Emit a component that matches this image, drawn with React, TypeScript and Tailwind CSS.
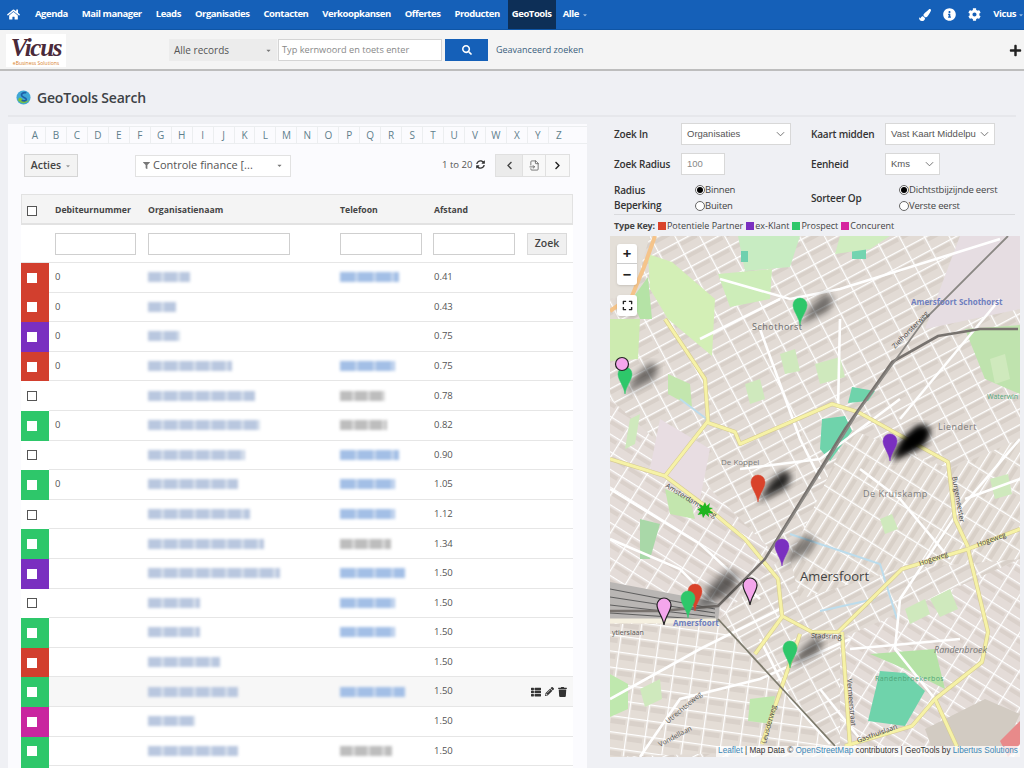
import { FaHome, FaInfoCircle, FaCog, FaPaintBrush, FaSearch, FaPlus, FaSyncAlt, FaChevronLeft, FaChevronRight, FaThList, FaPencilAlt, FaTrash, FaFilter, FaCaretDown, FaExpand } from 'react-icons/fa';
import { FileInput } from 'lucide-react';

const navItems = ['Agenda', 'Mail manager', 'Leads', 'Organisaties', 'Contacten', 'Verkoopkansen', 'Offertes', 'Producten'];
const letters = 'ABCDEFGHIJKLMNOPQRSTUVWXYZ'.split('');

const RED = 'bg-[#d23f2e]';
const PURPLE = 'bg-[#7a2fc0]';
const GREEN = 'bg-[#2ec76a]';
const PINK = 'bg-[#c9259f]';

const rows = [
  { color: RED, deb: '0', name: 42, phone: 59, blue: true, dist: '0.41' },
  { color: RED, deb: '0', name: 28, phone: 0, blue: true, dist: '0.43' },
  { color: PURPLE, deb: '0', name: 32, phone: 0, blue: true, dist: '0.75' },
  { color: RED, deb: '0', name: 84, phone: 55, blue: true, dist: '0.75' },
  { color: '', deb: '', name: 107, phone: 45, blue: false, dist: '0.78' },
  { color: GREEN, deb: '0', name: 112, phone: 47, blue: false, dist: '0.82' },
  { color: '', deb: '', name: 97, phone: 59, blue: true, dist: '0.90' },
  { color: GREEN, deb: '0', name: 90, phone: 55, blue: true, dist: '1.05' },
  { color: '', deb: '', name: 102, phone: 55, blue: true, dist: '1.12' },
  { color: GREEN, deb: '', name: 116, phone: 51, blue: false, dist: '1.34' },
  { color: PURPLE, deb: '', name: 132, phone: 65, blue: true, dist: '1.50' },
  { color: '', deb: '', name: 52, phone: 55, blue: true, dist: '1.50' },
  { color: GREEN, deb: '', name: 52, phone: 55, blue: true, dist: '1.50' },
  { color: RED, deb: '', name: 72, phone: 0, blue: true, dist: '1.50' },
  { color: GREEN, deb: '', name: 90, phone: 65, blue: true, dist: '1.50', hover: true },
  { color: PINK, deb: '', name: 47, phone: 0, blue: true, dist: '1.50' },
  { color: GREEN, deb: '', name: 90, phone: 52, blue: false, dist: '1.50' },
  { color: GREEN, deb: '', name: 0, phone: 0, blue: true, dist: '' },
];

const legend = [
  { label: 'Potentiele Partner', color: 'bg-[#d9432b]' },
  { label: 'ex-Klant', color: 'bg-[#7a2fc0]' },
  { label: 'Prospect', color: 'bg-[#2ec76a]' },
  { label: 'Concurent', color: 'bg-[#d6249f]' },
];

function Logo() {
  return (
    <div className="w-[60px] h-[33px] bg-white flex flex-col items-center justify-center">
      <span className="text-[25px] leading-[25px] italic font-bold text-[#4a2a3a] tracking-tighter font-['Liberation_Serif',serif]">Vicus</span>
      <span className="text-[5px] leading-[6px] text-[#d9822b]">eBusiness Solutions</span>
    </div>
  );
}

function Pin({ x, y, fill, stroke }: { x: number; y: number; fill: string; stroke?: string }) {
  return (
    <path
      transform={`translate(${x} ${y})`}
      d="M0 0 C-1 -8 -7 -14 -7 -20 A7 7 0 1 1 7 -20 C7 -14 1 -8 0 0Z"
      fill={fill}
      stroke={stroke ?? fill}
      strokeWidth={stroke ? 1.2 : 0.5}
    />
  );
}

function Shadow({ x, y, dark = 0.55, size = 1 }: { x: number; y: number; dark?: number; size?: number }) {
  return (
    <path
      transform={`translate(${x} ${y}) scale(${size})`}
      d="M0 0 L12 -20 L26 -32 L34 -26 L28 -14 Z"
      fill="#000"
      opacity={dark}
      filter="url(#blur)"
    />
  );
}

function MapDrawing() {
  const yellow = [
    'M665 320 L705 380 L708 422 L665 477 L610 460',
    'M706 423 L735 433 L740 445 L832 405 L858 413 L948 463 L955 520 L968 548',
    'M665 477 L705 507 L745 540 L778 580 L782 617 L812 633 L838 633 L902 570 L968 550 L1020 530',
    'M968 550 L988 633 L982 663 L935 700 L912 727 L845 747',
    'M782 618 L755 655',
    'M800 635 L762 745',
    'M842 633 L850 747',
    'M935 700 L958 750',
  ];
  const white = [
    'M610 490 L700 545 L760 600',
    'M720 280 L790 300 L840 290 L1000 240',
    'M760 330 L800 440 L820 480',
    'M840 320 L838 410',
    'M740 470 L820 460 L900 400',
    'M860 470 L900 500 L950 560',
    'M1020 440 L960 510 L900 600 L895 650 L935 700',
    'M900 420 L1000 300',
    'M610 700 L700 650 L780 610',
    'M640 758 L680 700 L760 680 L850 640',
    'M850 650 L960 640',
    'M820 690 L860 740',
    'M610 540 L680 570 L720 610',
    'M1020 480 L965 500',
    'M700 340 L780 300',
    'M760 640 L790 700 L830 745',
  ];
  const parks = [
    'M880 520 L892 515 L898 530 L885 535Z',
    'M930 600 L950 590 L958 610 L940 618Z',
    'M990 480 L1008 475 L1012 495 L995 500Z',
    'M780 355 L795 350 L800 372 L785 375Z',
    'M815 365 L840 358 L845 378 L820 385Z',
    'M745 385 L760 380 L765 400 L750 405Z',
    'M630 420 L640 415 L635 445 L625 450Z',
    'M990 360 L1005 355 L1010 380 L995 385Z',
    'M905 610 L925 600 L930 615 L910 625Z',
    'M640 690 L660 680 L662 700 L645 708Z',
  ];
  return (
    <svg viewBox="610 237 410 521" className="block w-[410px] h-[521px]">
      <defs>
        <filter id="blur"><feGaussianBlur stdDeviation="3.5" /></filter>
        <pattern id="b1" width="22" height="14" patternUnits="userSpaceOnUse" patternTransform="rotate(-28)">
          <rect width="22" height="14" fill="#e2dbd5" />
          <rect x="2" y="2" width="18" height="4" fill="#d8d0c9" />
          <path d="M0 0.5H22M0.5 0V14" stroke="#fff" strokeWidth="1.4" />
        </pattern>
        <pattern id="b2" width="20" height="15" patternUnits="userSpaceOnUse" patternTransform="rotate(32)">
          <rect width="20" height="15" fill="#e4dcd8" />
          <rect x="2" y="3" width="16" height="4" fill="#dad1cb" />
          <path d="M0 0.5H20M0.5 0V15" stroke="#fff" strokeWidth="1.4" />
        </pattern>
        <pattern id="b3" width="24" height="13" patternUnits="userSpaceOnUse" patternTransform="rotate(-58)">
          <rect width="24" height="13" fill="#e3dcd5" />
          <rect x="2" y="3" width="20" height="4" fill="#d8d0c8" />
          <path d="M0 0.5H24M0.5 0V13" stroke="#fff" strokeWidth="1.4" />
        </pattern>
        <pattern id="b4" width="19" height="16" patternUnits="userSpaceOnUse" patternTransform="rotate(8)">
          <rect width="19" height="16" fill="#e4ddd6" />
          <rect x="2" y="3" width="15" height="5" fill="#d9d1ca" />
          <path d="M0 0.5H19M0.5 0V16" stroke="#fff" strokeWidth="1.4" />
        </pattern>
      </defs>

      {/* residential districts */}
      <rect x="610" y="237" width="410" height="521" fill="url(#b1)" />
      <path d="M610 400 L700 480 L780 560 L720 620 L610 620Z" fill="url(#b2)" />
      <path d="M850 430 L950 470 L1020 440 L1020 560 L900 570 L800 600 L790 560Z" fill="url(#b3)" />
      <path d="M610 625 L720 625 L840 750 L610 758Z" fill="url(#b4)" />
      <path d="M840 640 L1020 560 L1020 758 L840 758Z" fill="url(#b2)" />
      <path d="M660 420 L710 450 L700 500 L650 470Z" fill="#e8dde2" />
      <path d="M960 237 L1020 237 L1020 310 L925 330Z" fill="#e6dde2" />

      {/* green and water */}
      <path d="M648 255 L672 263 L715 300 L712 357 L668 320 L650 290Z" fill="#d3efb6" />
      <path d="M610 237 L650 237 L632 297 L610 300Z" fill="#e4dfd8" />
      <path d="M632 300 L648 278 L652 320 L640 320Z" fill="#b5e3a6" />
      <path d="M610 320 L640 320 L638 360 L610 362Z" fill="#cdebb0" />
      <path d="M718 275 L772 270 L770 300 L730 308Z" fill="#cdedb9" />
      <path d="M738 237 L800 237 L790 268 L745 272Z" fill="#c8ecc2" />
      <path d="M741 252 L748 252 L748 263 L741 263Z" fill="#6fd0ae" />
      <path d="M852 250 L866 250 L866 260 L852 260Z" fill="#73d4b0" />
      <path d="M840 237 L890 237 L870 250 L835 255Z" fill="#d0edc0" />
      <path d="M965 330 L1020 326 L1020 395 L985 380Z" fill="#bfe3ae" />
      <path d="M822 420 L845 417 L852 432 L830 462 L820 450Z" fill="#6fd3ab" />
      <path d="M852 388 L875 392 L868 402 L848 404Z" fill="#6fd3ab" />
      <path d="M668 375 L690 385 L692 408 L668 395Z" fill="#c3e6ae" />
      <path d="M665 490 L690 500 L695 520 L670 515Z" fill="#c3e6ae" />
      <path d="M880 672 L905 674 L925 692 L905 727 L868 722Z" fill="#6fd3ab" />
      <path d="M870 655 L935 650 L945 690 L905 670Z" fill="#b5e2a6" />
      <path d="M750 700 L775 697 L772 725 L748 722Z" fill="#bfe8ae" />
      <path d="M610 675 L628 685 L628 710 L610 718Z" fill="#bfe8ae" />
      <path d="M640 520 L660 525 L650 560 L640 560Z" fill="#a9d8a8" />
      <path d="M925 730 L985 700 L1020 715 L1000 758 L935 758Z" fill="#d2cbc2" />
      <path d="M1000 742 L1020 722 L1020 745 L1008 758Z" fill="#e88a8a" />
      {parks.map((d) => (
        <path key={d} d={d} fill="#cfe9bd" />
      ))}

      {/* water lines */}
      <path d="M680 400 L720 430 M790 535 L880 565 L897 620 M820 612 L875 600" stroke="#bcdcec" strokeWidth="2" fill="none" />

      {/* white streets */}
      {white.map((d) => (
        <path key={d} d={d} stroke="#fff" strokeWidth="2.6" fill="none" />
      ))}

      {/* rail yard */}
      <path d="M610 583 L700 600 L720 605 L718 623 L610 620Z" fill="#b9b6b4" />
      <path d="M610 590 L715 610 M610 598 L715 614 M610 606 L715 618 M610 614 L715 621" stroke="#5f5f5f" strokeWidth="1.2" fill="none" />
      <path d="M610 622 L716 622" stroke="#f5f0e0" strokeWidth="5" fill="none" />

      {/* main roads */}
      {yellow.map((d) => (
        <path key={d} d={d} stroke="#d6cb92" strokeWidth="4.2" fill="none" strokeLinejoin="round" />
      ))}
      {yellow.map((d) => (
        <path key={d + 'i'} d={d} stroke="#f6f2a6" strokeWidth="3" fill="none" strokeLinejoin="round" />
      ))}
      <path d="M655 237 L644 268 L632 297 L610 312" stroke="#f5c48a" strokeWidth="4" fill="none" />

      {/* railways */}
      <path d="M1018 330 L980 330 L938 337 L892 363 L845 430 L765 560 L718 607 L660 612 L610 612" stroke="#77726e" strokeWidth="2.6" fill="none" />
      <path d="M1008 237 L925 320 L858 413 L772 550" stroke="#8a8783" strokeWidth="1.8" fill="none" />
      <path d="M718 620 L835 747" stroke="#7c7a6c" strokeWidth="1.8" fill="none" />

      {/* labels */}
      <g fontFamily="'Open Sans', sans-serif">
        <text x="752" y="331" fontSize="9" fill="#6b6b6b" letterSpacing="0.5">Schothorst</text>
        <text x="911" y="306" fontSize="8" fontWeight="700" fill="#6f7fbf">Amersfoort Schothorst</text>
        <text x="938" y="431" fontSize="9" fill="#7c7c7c" letterSpacing="0.5">Liendert</text>
        <text x="721" y="466" fontSize="8" fill="#7c7c7c">De Koppel</text>
        <text x="863" y="498" fontSize="9" fill="#7c7c7c" letterSpacing="0.5">De Kruiskamp</text>
        <text x="987" y="400" fontSize="7" fill="#4fa67a">Waterwin</text>
        <text x="800" y="582" fontSize="13" fill="#444">Amersfoort</text>
        <text x="673" y="627" fontSize="8" fontWeight="700" fill="#6f7fbf">Amersfoort</text>
        <text x="934" y="654" fontSize="9" fill="#777" fontStyle="italic">Randenbroek</text>
        <text x="875" y="682" fontSize="7" fill="#4fa67a" letterSpacing="0.4">Randenbroekerbos</text>
        <text x="612" y="636" fontSize="7" fill="#555">ytierslaan</text>
        <text x="811" y="639" fontSize="7" fill="#444" transform="rotate(2 811 639)">Stadsring</text>
        <text x="920" y="567" fontSize="7" fill="#444" transform="rotate(-20 920 567)">Hogeweg</text>
        <text x="978" y="548" fontSize="7" fill="#444" transform="rotate(-20 978 548)">Hogeweg</text>
        <text x="665" y="488" fontSize="7" fill="#444" transform="rotate(32 665 488)">Amsterdamseweg</text>
        <text x="668" y="725" fontSize="7" fill="#555" transform="rotate(-40 668 725)">Utrechtseweg</text>
        <text x="660" y="748" fontSize="7" fill="#555" transform="rotate(-28 660 748)">Vondellaan</text>
        <text x="858" y="744" fontSize="7" fill="#444" transform="rotate(-20 858 744)">Gasthuislaan</text>
        <text x="847" y="680" fontSize="7" fill="#444" transform="rotate(85 847 680)">Vermeerstraat</text>
        <text x="766" y="745" fontSize="7" fill="#444" transform="rotate(-75 766 745)">Leusderweg</text>
        <text x="952" y="478" fontSize="7" fill="#444" transform="rotate(80 952 478)">Burgemeester</text>
        <text x="895" y="350" fontSize="7" fill="#444" transform="rotate(-46 895 350)">Zielhorsterweg</text>
      </g>

      {/* markers */}
      <Shadow x={800} y={326} dark={0.5} />
      <Pin x={800} y={326} fill="#2ec76a" />
      <Shadow x={625} y={395} dark={0.5} />
      <Pin x={625} y={395} fill="#2ec76a" />
      <circle cx="622" cy="365" r="6.5" fill="#f4a6ec" stroke="#222" strokeWidth="1.2" />
      <Shadow x={890} y={462} dark={1} size={1.1} />
      <Shadow x={894} y={460} dark={1} size={1.1} />
      <Pin x={890} y={462} fill="#7a2fc0" />
      <Shadow x={758} y={503} dark={0.85} />
      <Pin x={758} y={503} fill="#d9432b" />
      <path d="M705 503 L706.500 507 L710 504 L709 508.500 L713 509 L709.500 511 L713 514 L708.500 514 L709 518 L705.500 515 L703 519 L702 515 L697.500 516 L700 512.500 L697 510 L701 509 L699 505 L703 507Z" fill="#1fb51f" />
      <Shadow x={782} y={567} dark={0.45} />
      <Pin x={782} y={567} fill="#7a2fc0" />
      <Pin x={750} y={606} fill="#f4a6ec" stroke="#222" />
      <Shadow x={695} y={612} dark={0.6} size={1.3} />
      <Pin x={695} y={612} fill="#d9432b" />
      <Pin x={688} y={619} fill="#2ec76a" />
      <Pin x={664} y={626} fill="#f4a6ec" stroke="#222" />
      <Shadow x={790} y={669} dark={0.5} />
      <Pin x={790} y={669} fill="#2ec76a" />
    </svg>
  );
}

function Blur({ width, tone }: { width: number; tone: 'name' | 'blue' | 'gray' }) {
  const color =
    tone === 'name'
      ? 'bg-[repeating-linear-gradient(90deg,#b9c7df_0_13px,#d6dfec_13px_16px)]'
      : tone === 'blue'
        ? 'bg-[repeating-linear-gradient(90deg,#a3bfe6_0_15px,#c5d6ef_15px_18px)]'
        : 'bg-[repeating-linear-gradient(90deg,#bdbdbd_0_12px,#dadada_12px_15px)]';
  return <div className={`h-[10px] blur-[1.5px] ${color}`} style={{ width }} />;
}

function Radio({ on, label }: { on: boolean; label: string }) {
  return (
    <div className="flex items-center h-[16px] text-[9.500px] text-[#444] tracking-[-0.2px] whitespace-nowrap">
      <span className="w-[10px] h-[10px] rounded-full border border-[#666] bg-white flex items-center justify-center shrink-0">
        {on && <span className="w-[6px] h-[6px] rounded-full bg-black" />}
      </span>
      {label}
    </div>
  );
}

function Select({ label, className }: { label: string; className: string }) {
  return (
    <div className={`h-[22px] bg-white border border-[#d8d8d8] flex items-center justify-between pl-[5px] pr-[5px] text-[9.500px] text-[#555] font-['Liberation_Sans',sans-serif] ${className}`}>
      <span className="whitespace-nowrap">{label}</span>
      <svg viewBox="0 0 10 6" className="w-[9px] h-[6px] shrink-0"><path d="M1 1l4 4 4-4" fill="none" stroke="#666" strokeWidth="1" /></svg>
    </div>
  );
}

const labelCls = 'text-[10px] font-semibold text-[#333] tracking-[-0.2px]';

export default function App() {
  return (
    <div className="w-[1024px] h-screen overflow-hidden bg-[#eff0f4] font-['Open_Sans',sans-serif] text-[#555]">
      {/* top nav */}
      <nav className="h-[30px] bg-[#1560b8] border-b border-[#0f55a5] flex items-center text-white text-[9.500px] font-bold tracking-[-0.45px]">
        <div className="w-[26px] flex justify-center"><FaHome className="w-[13px] h-[13px]" /></div>
        <div className="flex items-center gap-[14px] pl-[9px]">
          {navItems.map((item) => (
            <span key={item} className="whitespace-nowrap">{item}</span>
          ))}
        </div>
        <div className="ml-[8px] h-full w-[48px] bg-[#0d2f57] flex items-center justify-center">GeoTools</div>
        <span className="ml-[7px]">Alle</span>
        <FaCaretDown className="w-[6px] h-[6px] ml-[3px] text-[#8fb5e0]" />
        <div className="ml-auto flex items-center">
          <FaPaintBrush className="w-[12px] h-[12px]" />
          <FaInfoCircle className="w-[13px] h-[13px] ml-[12px]" />
          <FaCog className="w-[13px] h-[13px] ml-[12px]" />
          <span className="ml-[12px]">Vicus</span>
          <FaCaretDown className="w-[6px] h-[6px] ml-[2px] text-[#8fb5e0]" />
        </div>
      </nav>

      {/* search bar */}
      <header className="h-[41px] bg-[#f4f4f4] border-b-2 border-[#bdbdbd] flex items-center pl-[6px] pt-[1px]">
        <Logo />
        <div className="ml-[103px] w-[108px] h-[22px] bg-[#ececec] flex items-center justify-between px-[5px] text-[10px] text-[#555]">
          Alle records
          <FaCaretDown className="w-[7px] h-[7px] text-[#777]" />
        </div>
        <div className="ml-[1px] w-[164px] h-[22px] bg-white border border-[#d4d4d4] flex items-center px-[3px] text-[9.200px] text-[#888] whitespace-nowrap">Typ kernwoord en toets enter</div>
        <div className="ml-[3px] w-[43px] h-[22px] bg-[#1560b8] flex items-center justify-center">
          <FaSearch className="w-[10px] h-[10px] text-white" />
        </div>
        <span className="ml-[8px] text-[9px] text-[#3b5f7d]">Geavanceerd zoeken</span>
        <FaPlus className="ml-auto mr-[2px] w-[13px] h-[13px] text-[#222]" />
      </header>

      {/* page title */}
      <div className="mx-[8px] h-[46px] border-b-2 border-[#e6e7eb] flex items-center pl-[8px] pt-[9px]">
        <svg viewBox="0 0 16 16" className="w-[15px] h-[15px]">
          <circle cx="8" cy="8" r="7.5" fill="#3fa7d6" />
          <path d="M2 11c3 4 9 4 12 0-3 1-6 0-8-2S3 8 2 11z" fill="#7cc242" />
          <path d="M11 3C8 2 5 4 6 6s5 2 5 4-3 2-5 1" fill="none" stroke="#1d5fa8" strokeWidth="1.800" />
        </svg>
        <h1 className="ml-[6px] text-[14px] font-semibold text-[#3d4246] tracking-[-0.2px]">GeoTools Search</h1>
      </div>

      <div className="flex pl-[8px] pt-[7px]">
        {/* left panel */}
        <section className="w-[579px] h-[700px] bg-[#fbfbfe] pl-[13px] shrink-0">
          <div className="ml-[3px] flex h-[18px] mt-[2px] border-y border-[#eceef0]">
            {letters.map((letter) => (
              <span key={letter} className="w-[20.960px] border-l border-[#eceef0] flex items-center justify-center text-[10px] text-[#5f7f8c]">{letter}</span>
            ))}
          </div>

          <div className="ml-[3px] mt-[10px] h-[23px] flex items-center">
            <div className="w-[54px] h-[23px] bg-[#f3f3f3] border border-[#d5d5d5] flex items-center justify-center text-[10.500px] font-semibold text-[#444]">
              Acties
              <FaCaretDown className="w-[6px] h-[6px] ml-[4px] text-[#999]" />
            </div>
            <div className="ml-[57px] w-[156px] h-[22px] bg-white border border-[#e2e2e2] flex items-center pl-[7px] pr-[7px] text-[11px] text-[#555]">
              <FaFilter className="w-[7px] h-[7px] text-[#777] mr-[3px]" />
              Controle finance [...
              <FaCaretDown className="w-[7px] h-[7px] ml-auto text-[#777]" />
            </div>
            <span className="ml-[151px] text-[9.500px] text-[#555] whitespace-nowrap">1 to 20</span>
            <FaSyncAlt className="ml-[4px] w-[9px] h-[9px] text-[#333] mb-[2px]" />
            <div className="ml-[10px] flex h-[23px] w-[75px] border border-[#e0e0e0] bg-[#f8f8f8]">
              <div className="w-[26px] bg-[#ebebeb] flex items-center justify-center"><FaChevronLeft className="w-[9px] h-[9px] text-[#444]" /></div>
              <div className="w-[24px] border-x border-[#e0e0e0] flex items-center justify-center"><FileInput className="w-[11px] h-[11px] text-[#444]" strokeWidth={1.5} /></div>
              <div className="flex-1 flex items-center justify-center"><FaChevronRight className="w-[9px] h-[9px] text-[#222]" /></div>
            </div>
          </div>

          {/* table */}
          <div className="mt-[17px] w-[552px]">
            <div className="h-[31px] bg-[#f4f4f4] border-t border-x border-b-2 border-[#e2e2e2] pt-[4px] grid grid-cols-[33px_93px_192px_94px_1fr] items-center text-[8.700px] font-bold text-[#444]">
              <span className="ml-[5px] w-[10px] h-[10px] border border-[#555] bg-white" />
              <span>Debiteurnummer</span>
              <span>Organisatienaam</span>
              <span>Telefoon</span>
              <span>Afstand</span>
            </div>
            <div className="h-[38px] bg-white border-b border-[#e6e6e6] grid grid-cols-[34px_93px_192px_93px_94px_1fr] items-center">
              <span />
              <span className="w-[81px] h-[22px] border border-[#cfcfcf] bg-white" />
              <span className="w-[142px] h-[22px] border border-[#cfcfcf] bg-white" />
              <span className="w-[82px] h-[22px] border border-[#cfcfcf] bg-white" />
              <span className="w-[82px] h-[22px] border border-[#cfcfcf] bg-white" />
              <span className="w-[40px] h-[22px] bg-[#f0f0f0] border border-[#dadada] flex items-center justify-center text-[10.500px] font-semibold text-[#444]">Zoek</span>
            </div>
            {rows.map((row, i) => (
              <div key={i} className={`h-[29.600px] grid grid-cols-[34px_93px_192px_94px_1fr] items-center text-[9.500px] text-[#555] ${row.hover ? 'bg-[#f7f7f7]' : 'bg-white'}`}>
                <div className={`h-full w-[28px] flex items-center pl-[6px] ${row.color}`}>
                  <span className={`w-[10px] h-[10px] ${row.color ? 'bg-white' : 'bg-white border border-[#555]'}`} />
                </div>
                <div className="h-full flex items-center border-b border-[#e6e6e6] -ml-[6px] pl-[6px]">{row.deb}</div>
                <div className="h-full flex items-center border-b border-[#e6e6e6]">{row.name > 0 && <Blur width={row.name} tone="name" />}</div>
                <div className="h-full flex items-center border-b border-[#e6e6e6]">
                  {row.phone > 0 && <Blur width={row.phone} tone={row.blue ? 'blue' : 'gray'} />}
                </div>
                <div className="h-full flex items-center justify-between border-b border-[#e6e6e6] pr-[6px]">
                  {row.dist}
                  {row.hover && (
                    <span className="flex items-center gap-[4px] text-[#333]">
                      <FaThList className="w-[10px] h-[10px]" />
                      <FaPencilAlt className="w-[9px] h-[9px]" />
                      <FaTrash className="w-[9px] h-[10px]" />
                    </span>
                  )}
                </div>
              </div>
            ))}
          </div>
        </section>

        {/* right panel */}
        <section className="pl-[27px] w-[433px] shrink-0">
          <div className="grid grid-cols-[67px_130px_74px_auto] items-center gap-y-[8px] -mt-[1px]">
            <span className={labelCls}>Zoek In</span>
            <Select label="Organisaties" className="w-[110px]" />
            <span className={labelCls}>Kaart midden</span>
            <Select label="Vast Kaart Middelpu" className="w-[110px]" />
            <span className={labelCls}>Zoek Radius</span>
            <div className="w-[44px] h-[22px] bg-white border border-[#d8d8d8] flex items-center pl-[5px] text-[9.500px] text-[#888] font-['Liberation_Sans',sans-serif]">100</div>
            <span className={labelCls}>Eenheid</span>
            <Select label="Kms" className="w-[55px]" />
            <span className={`${labelCls} leading-[15px] -mt-[2px]`}>Radius Beperking</span>
            <div className="pl-[14px] -mt-[1px]">
              <Radio on label="Binnen" />
              <Radio on={false} label="Buiten" />
            </div>
            <span className={labelCls}>Sorteer Op</span>
            <div className="pl-[14px] -mt-[1px]">
              <Radio on label="Dichtstbijzijnde eerst" />
              <Radio on={false} label="Verste eerst" />
            </div>
          </div>
          <div className="border-t border-[#d9dadd] w-[401px] h-[22px] flex items-center text-[9px] text-[#444] whitespace-nowrap">
            <span className="font-bold tracking-[-0.2px] mr-[3px]">Type Key:</span>
            {legend.map((item) => (
              <span key={item.label} className="flex items-center mr-[3px]">
                <span className={`w-[8px] h-[8px] mr-[1px] ${item.color}`} />
                {item.label}
              </span>
            ))}
          </div>
          <div className="relative -ml-[4px] w-[410px] h-[521px] overflow-hidden">
            <MapDrawing />
            <div className="absolute left-[7px] top-[8px] w-[20px] h-[41px] bg-white rounded-[3px] shadow flex flex-col items-center text-[#222] font-bold">
              <span className="h-[20px] flex items-center justify-center text-[15px] leading-none border-b border-[#ccc] w-full">+</span>
              <span className="h-[20px] flex items-center justify-center text-[15px] leading-none">−</span>
            </div>
            <div className="absolute left-[7px] top-[59px] w-[20px] h-[21px] bg-white rounded-[3px] shadow flex items-center justify-center">
              <FaExpand className="w-[11px] h-[11px] text-[#222]" />
            </div>
            <div className="absolute right-0 bottom-0 h-[11px] w-[304px] bg-white/75 flex items-center justify-center text-[8.200px] text-[#333] font-['Liberation_Sans',sans-serif] whitespace-nowrap">
              <span className="text-[#3a87b7]">Leaflet</span>&nbsp;| Map Data ©&nbsp;
              <span className="text-[#3a87b7]">OpenStreetMap</span>&nbsp;contributors | GeoTools by&nbsp;
              <span className="text-[#3a87b7]">Libertus Solutions</span>
            </div>
          </div>
        </section>
      </div>
    </div>
  );
}
